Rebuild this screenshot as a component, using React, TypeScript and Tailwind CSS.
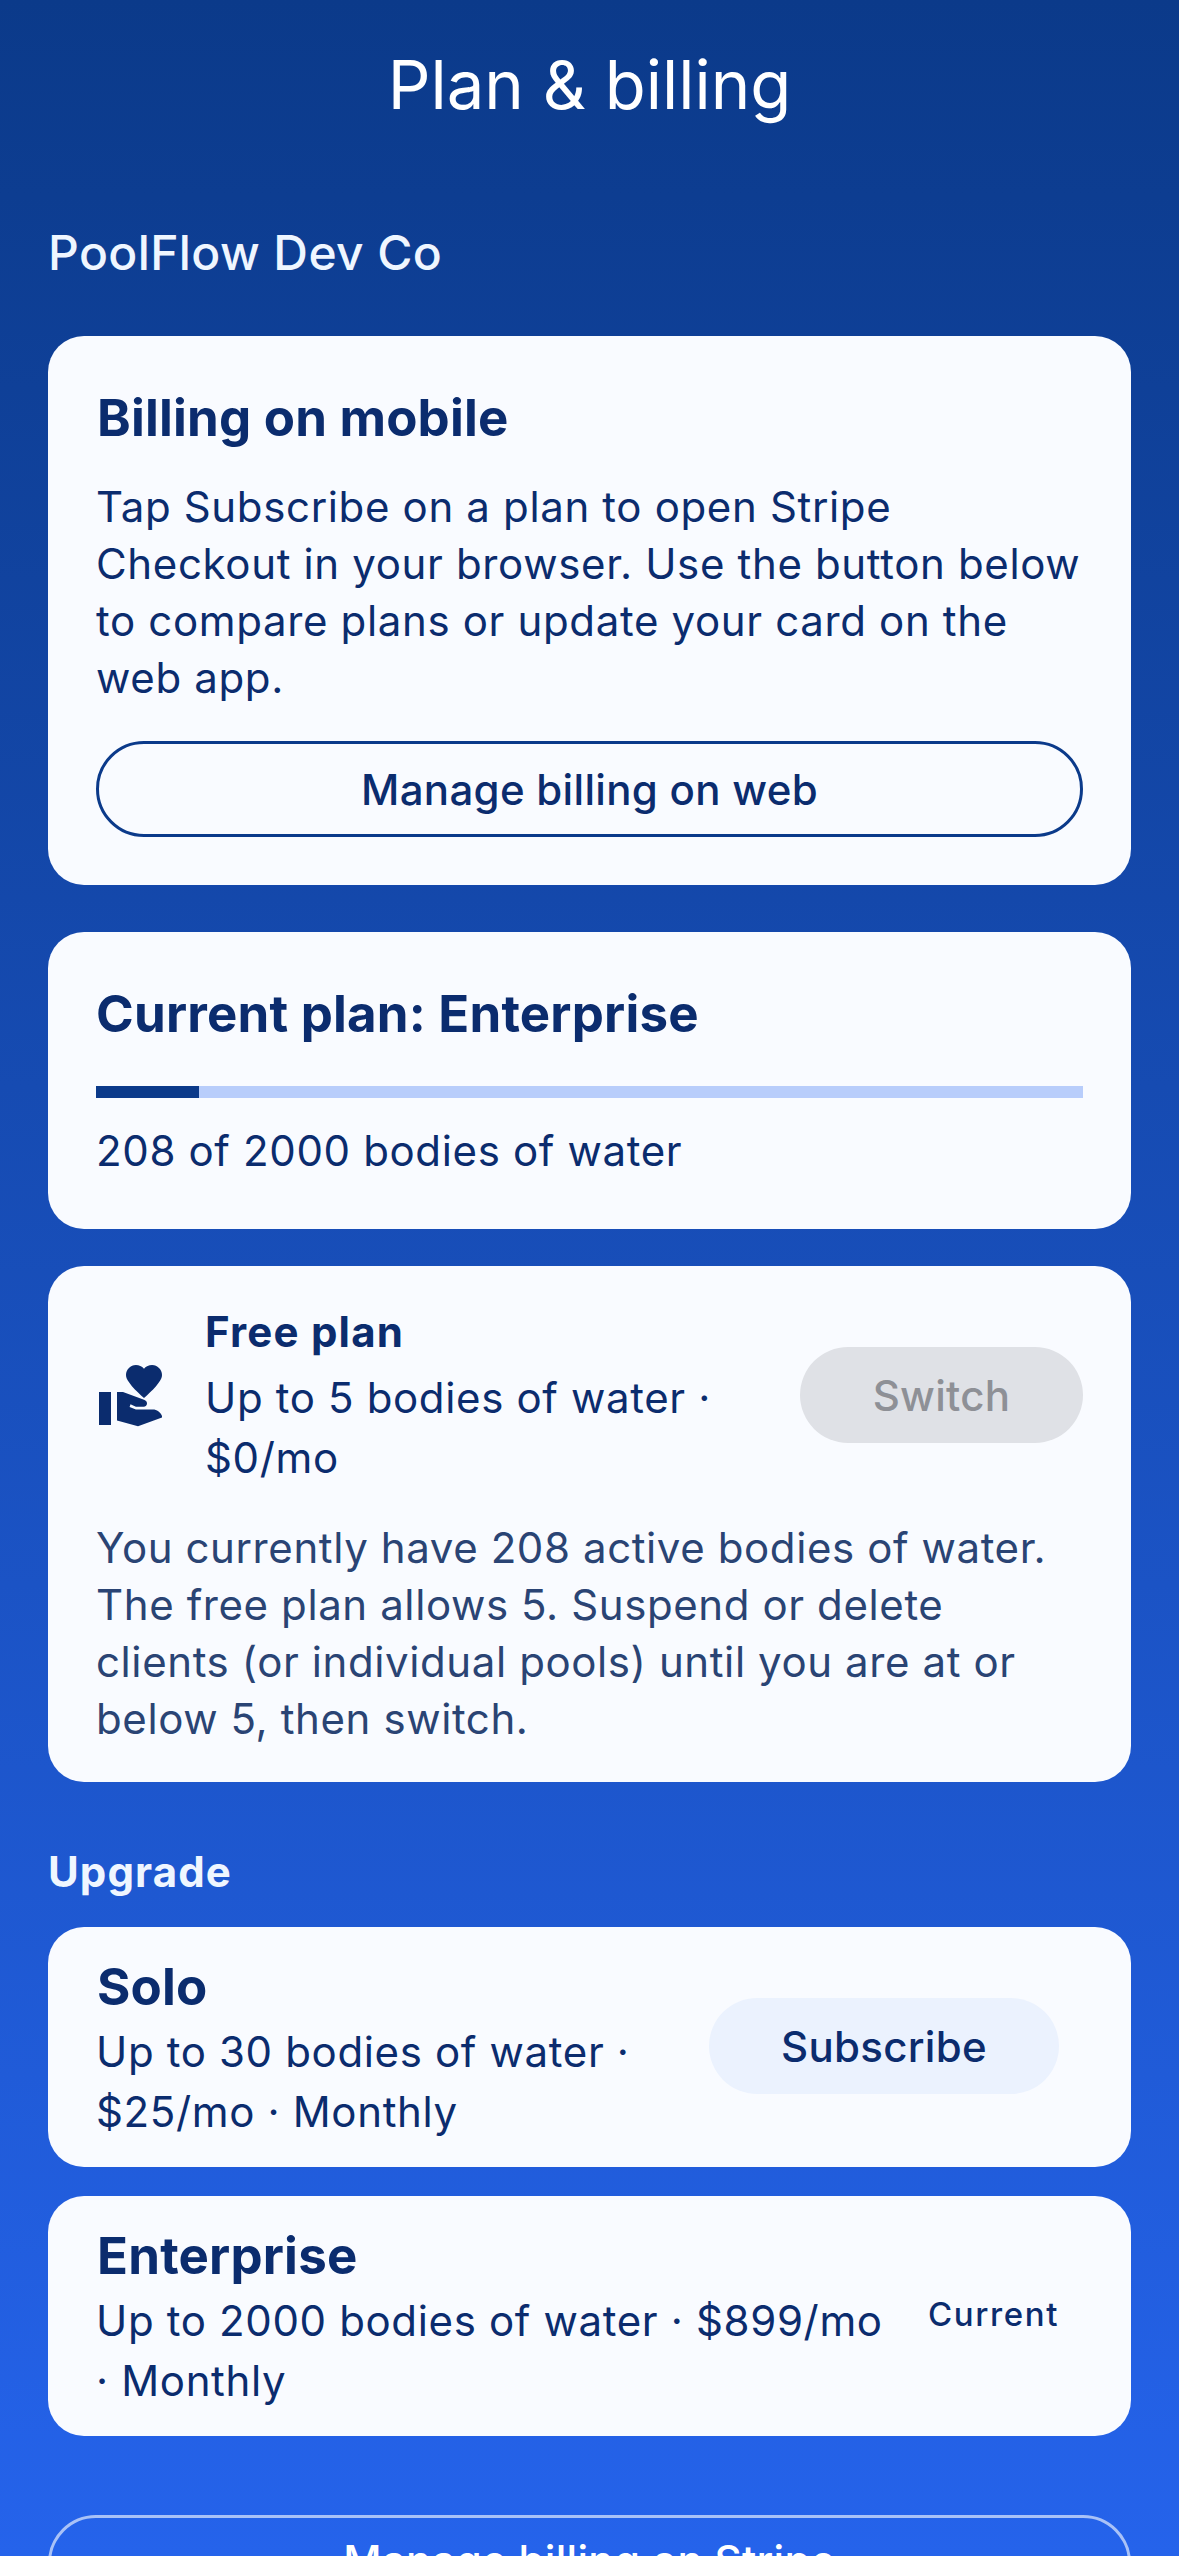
const HandHeart = () => (
  <svg viewBox="0 0 24 24" className="mr-[37px] size-[72px] shrink-0 fill-[#0b2c6e]">
    <path d="M16 3.23C16.71 2.41 17.61 2 18.7 2C19.61 2 20.37 2.33 21 3C21.67 3.67 22 4.43 22 5.3C22 6 21.67 6.81 21 7.76S19.68 9.5 19.03 10.15C18.38 10.79 17.37 11.74 16 13C14.61 11.74 13.6 10.79 12.96 10.15S11.63 8.71 11 7.76C10.33 6.81 10 6 10 5.3C10 4.39 10.32 3.63 10.97 3C11.62 2.37 12.39 2 13.3 2C14.38 2 15.27 2.41 16 3.23Z" />
    <path d="M1 11H5V22H1Z" />
    <path d="M7 11H9L16 13.6C16.7 13.9 17 14.3 17 14.8C17 15.4 16.5 15.9 15.9 15.9H13.3L11.5 15.1L11.2 16L13.3 16.8H19C20.2 16.8 21.5 17.6 22 19V19.5L14 22.4L7 20.5Z" />
  </svg>
);

const Card = ({ className = "", children }: { className?: string; children: React.ReactNode }) => (
  <div className={`rounded-[36px] bg-[#f9fbff] ${className}`}>{children}</div>
);

const PlanRow = ({ name, desc, children }: { name: string; desc: string; children: React.ReactNode }) => (
  <Card className="flex h-[240px] items-center pl-[48px] pr-[72px]">
    <div className="min-w-0 flex-1 pt-[4px]">
      <div className="pl-px text-[51px] leading-[60px] font-bold text-[#0b2c6e] tracking-[0.2px]">{name}</div>
      <div className="mt-[5px] text-[42px] leading-[60px] text-[#0b2c6e] tracking-[0.65px]">{desc}</div>
    </div>
    {children}
  </Card>
);

export default function App() {
  return (
    <div className="h-[2556px] overflow-hidden bg-gradient-to-b from-[#0b3a8a] to-[#2563eb] px-[48px] font-['Inter',sans-serif]">
      <h1 className="pt-[45px] text-center text-[67px] leading-[80px] font-normal text-white">Plan &amp; billing</h1>
      <div className="mt-[98px] text-[48px] leading-[60px] font-medium text-[#eff6ff] tracking-[0.4px]">PoolFlow Dev Co</div>

      <Card className="mt-[53px] h-[549px] px-[48px] pt-[52px]">
        <h2 className="pl-px text-[51px] leading-[60px] font-bold text-[#0b2c6e] tracking-[0.2px]">Billing on mobile</h2>
        <p className="mt-[30px] text-[42px] leading-[57px] text-[#0b2c6e] tracking-[0.65px]">
          Tap Subscribe on a plan to open Stripe Checkout in your browser. Use the button below to compare plans or update your card on the web app.
        </p>
        <button className="mt-[35px] flex h-[96px] w-full items-center justify-center rounded-full border-[3px] border-[#0b3a8a] text-[42px] font-medium text-[#0b2c6e] tracking-[0.3px]">
          Manage billing on web
        </button>
      </Card>

      <Card className="mt-[47px] h-[297px] px-[48px] pt-[52px]">
        <h2 className="text-[51px] leading-[60px] font-bold text-[#0b2c6e] tracking-[0.2px]">Current plan: Enterprise</h2>
        <div className="mt-[42px] h-[12px] bg-[#b8cdfb]">
          <div className="h-full w-[10.4%] bg-[#0b3a8a]" />
        </div>
        <p className="mt-[23px] text-[42px] leading-[60px] text-[#0b2c6e] tracking-[0.65px]">208 of 2000 bodies of water</p>
      </Card>

      <Card className="mt-[37px] h-[516px] px-[48px] pt-[36px]">
        <div className="flex items-center">
          <HandHeart />
          <div className="min-w-0 flex-1 pr-[60px]">
            <div className="text-[42px] leading-[60px] font-bold text-[#0b2c6e] tracking-[1.2px]">Free plan</div>
            <div className="mt-[6px] text-[42px] leading-[60px] text-[#0b2c6e] tracking-[0.65px]">Up to 5 bodies of water · $0/mo</div>
          </div>
          <button className="flex h-[96px] w-[283px] shrink-0 items-center justify-center rounded-full bg-[#dfe1e6] text-[42px] font-medium text-[#8e9096] tracking-[0.3px]">
            Switch
          </button>
        </div>
        <p className="mt-[31px] text-[42px] leading-[57px] text-[#2a4474] tracking-[0.6px]">
          You currently have 208 active bodies of water. The free plan allows 5. Suspend or delete clients (or individual pools) until you are at or below 5, then switch.
        </p>
      </Card>

      <div className="mt-[62px] text-[42px] leading-[56px] font-bold text-[#eff6ff] tracking-[1.1px]">Upgrade</div>

      <div className="mt-[27px] flex flex-col gap-[29px]">
        <PlanRow name="Solo" desc="Up to 30 bodies of water · $25/mo · Monthly">
          <button className="mb-[2px] ml-[60px] flex h-[96px] w-[350px] shrink-0 items-center justify-center rounded-full bg-[#ebf2fe] text-[42px] font-medium text-[#0b2c6e] tracking-[0.3px]">
            Subscribe
          </button>
        </PlanRow>
        <PlanRow name="Enterprise" desc="Up to 2000 bodies of water · $899/mo · Monthly">
          <span className="mb-[5px] ml-[36px] shrink-0 text-[33px] leading-[40px] font-medium text-[#0b2c6e] tracking-[1.6px]">Current</span>
        </PlanRow>
      </div>

      <button className="mt-[79px] flex h-[96px] w-full items-center justify-center rounded-full border-[3px] border-[#a9c2f7] pb-[6px] text-[42px] font-medium text-white tracking-[0.3px]">
        Manage billing on Stripe
      </button>
    </div>
  );
}
